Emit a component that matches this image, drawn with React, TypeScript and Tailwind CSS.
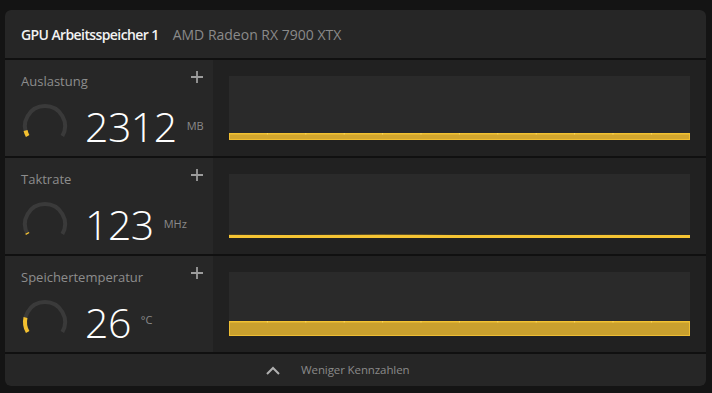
import React from "react";

const FONT = { fontFamily: '"Open Sans", "Noto Sans", sans-serif' };

function polar(cx: number, cy: number, r: number, deg: number) {
  const a = ((deg - 90) * Math.PI) / 180;
  return [cx + r * Math.cos(a), cy + r * Math.sin(a)];
}

function arcPath(cx: number, cy: number, r: number, start: number, end: number) {
  const [x1, y1] = polar(cx, cy, r, start);
  const [x2, y2] = polar(cx, cy, r, end);
  let sweep = end - start;
  if (sweep < 0) sweep += 360;
  const large = sweep > 180 ? 1 : 0;
  return `M ${x1} ${y1} A ${r} ${r} 0 ${large} 1 ${x2} ${y2}`;
}

function Gauge({ frac }: { frac: number }) {
  const start = 240;
  const span = 240;
  const end = (start + span) % 360;
  const vEnd = (start + span * frac) % 360;
  return (
    <svg width="48" height="48" viewBox="0 0 48 48" className="shrink-0">
      <path d={arcPath(24, 24, 20, start, end)} fill="none" stroke="#3a3a3a" strokeWidth="4" />
      <path d={arcPath(24, 24, 20, start, vEnd)} fill="none" stroke="#f3c02f" strokeWidth="4" />
    </svg>
  );
}

function Plus() {
  return (
    <svg width="12" height="12" viewBox="0 0 12 12" className="shrink-0">
      <path d="M6 0 V12 M0 6 H12" stroke="#9c9c9c" strokeWidth="1.8" />
    </svg>
  );
}

function Ticks({ y }: { y: number }) {
  const xs = Array.from({ length: 11 }, (_, i) => 38.4 * (i + 1));
  return (
    <>
      {xs.map((x) => (
        <rect key={x} x={x - 0.5} y={y} width="1" height="1.5" fill="#ffd75a" />
      ))}
    </>
  );
}

function ChartBar() {
  return (
    <svg width="100%" height="64" viewBox="0 0 461 64" preserveAspectRatio="none">
      <rect x="0" y="0" width="461" height="64" fill="#2a2a2a" />
      <rect x="0.5" y="57.5" width="460" height="6" fill="#d3a62e" stroke="#efbd30" strokeWidth="1" />
      <rect x="0" y="57" width="461" height="1.5" fill="#f2c232" />
      <Ticks y={57} />
    </svg>
  );
}

function ChartLine() {
  return (
    <svg width="100%" height="64" viewBox="0 0 461 64" preserveAspectRatio="none">
      <rect x="0" y="0" width="461" height="64" fill="#2a2a2a" />
      <polygon
        points="0,60.5 60,61 110,60.6 150,60 190,60.2 230,61 280,60.7 330,61 380,60.8 420,60.9 461,61 461,64 0,64"
        fill="#6b5a26"
      />
      <rect x="0" y="61" width="461" height="3" fill="#f5c433" />
    </svg>
  );
}

function ChartArea() {
  return (
    <svg width="100%" height="64" viewBox="0 0 461 64" preserveAspectRatio="none">
      <rect x="0" y="0" width="461" height="64" fill="#2a2a2a" />
      <rect x="0.5" y="49.5" width="460" height="14" fill="#c9a02e" stroke="#edbd34" strokeWidth="1" />
      <rect x="0" y="49" width="461" height="1.5" fill="#f2c232" />
      <Ticks y={49} />
    </svg>
  );
}

function Row({
  label,
  value,
  unit,
  frac,
  chart,
  unitClass,
}: {
  label: string;
  value: string;
  unit: string;
  frac: number;
  chart: React.ReactNode;
  unitClass?: string;
}) {
  return (
    <div className="flex h-[96px]">
      <div className="flex w-[208px] shrink-0 flex-col bg-[#272727] pl-4 pr-[10px]">
        <div className="flex items-start justify-between pt-[11px]">
          <div className="mt-[1px] text-[13px] leading-[18px] text-[#8d8d8d]">{label}</div>
          <Plus />
        </div>
        <div className="mt-[12px] flex items-center">
          <Gauge frac={frac} />
          <div className="ml-[16px] text-[41px] font-light leading-[48px] tracking-[-0.5px] text-white">{value}</div>
          <div className={`ml-[10px] text-[11px] text-[#8a8a8a] ${unitClass ?? ""}`}>{unit}</div>
        </div>
      </div>
      <div className="flex-1 bg-[#212121] px-4 pt-4">{chart}</div>
    </div>
  );
}

export default function App() {
  return (
    <div className="h-[393px] w-[712px] bg-[#141414] pb-[7px] pl-[5px] pr-[6px] pt-[10px]" style={FONT}>
      <div className="flex h-[376px] flex-col gap-[2px] overflow-hidden rounded-[6px] bg-[#101010]">
        <div className="flex h-[48px] shrink-0 items-center gap-[14px] bg-[#262626] px-4">
          <span className="text-[14px] font-semibold tracking-[-0.6px] text-[#f2f2f2]">GPU Arbeitsspeicher 1</span>
          <span className="text-[14px] text-[#8a8a8a]">AMD Radeon RX 7900 XTX</span>
        </div>
        <Row label="Auslastung" value="2312" unit="MB" frac={0.07} chart={<ChartBar />} />
        <Row label="Taktrate" value="123" unit="MHz" frac={0.015} chart={<ChartLine />} />
        <Row label="Speichertemperatur" value="26" unit="°C" frac={0.18} chart={<ChartArea />} unitClass="-mt-[4px]" />
        <div className="flex h-[32px] shrink-0 items-center bg-[#262626] pl-[261px]">
          <svg width="14" height="9" viewBox="0 0 14 9">
            <path d="M1 8 L7 2 L13 8" fill="none" stroke="#b0b0b0" strokeWidth="2" />
          </svg>
          <span className="ml-[21px] text-[11.5px] tracking-[-0.1px] text-[#8a8a8a]">Weniger Kennzahlen</span>
        </div>
      </div>
    </div>
  );
}
